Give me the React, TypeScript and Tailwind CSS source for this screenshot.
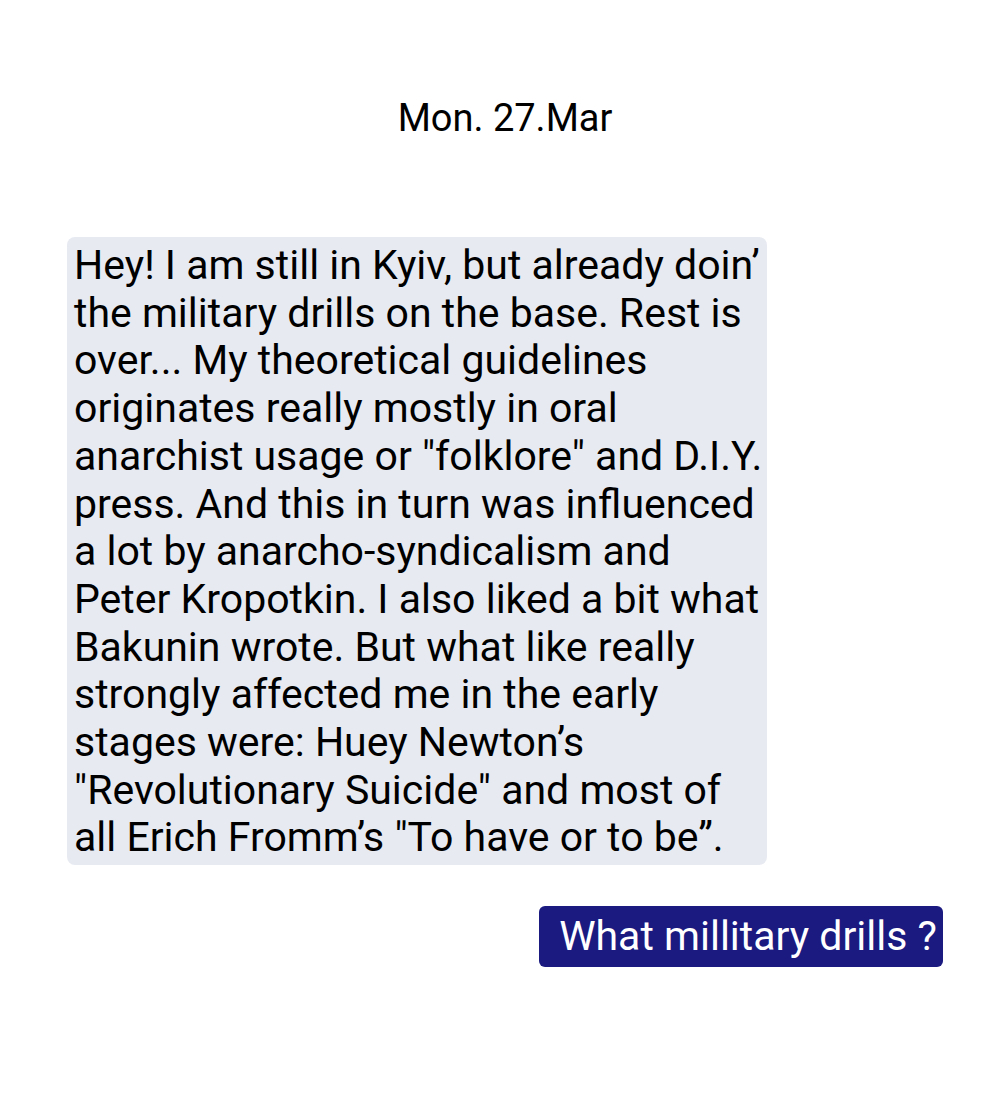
const lines = [
  "Hey! I am still in Kyiv, but already doin’",
  "the military drills on the base. Rest is",
  "over... My theoretical guidelines",
  "originates really mostly in oral",
  "anarchist usage or \"folklore\" and D.I.Y.",
  "press. And this in turn was influenced",
  "a lot by anarcho-syndicalism and",
  "Peter Kropotkin. I also liked a bit what",
  "Bakunin wrote. But what like really",
  "strongly affected me in the early",
  "stages were: Huey Newton’s",
  "\"Revolutionary Suicide\" and most of",
  "all Erich Fromm’s \"To have or to be”.",
];

export default function App() {
  return (
    <div className="w-[988px] h-[1118px] bg-white font-['Roboto',sans-serif] text-black flex flex-col">
      <div className="pt-[96px] pl-[22px] text-center text-[38px] leading-[44px]">Mon. 27.Mar</div>

      <div className="mt-[97px] ml-[67px] w-[700px] rounded-[8px] bg-[#e8eaf2] pl-[7px] pt-[5px] pb-[3px] text-[41px] leading-[47.7px]">
        {lines.map((l, i) => (
          <div key={i} className="whitespace-nowrap">{l}</div>
        ))}
      </div>

      <div className="mt-[41px] mr-[45px] self-end rounded-[6px] bg-[#1a1a80] pl-[20px] pr-[6px] h-[61px] flex items-center text-white text-[41px]">
        What millitary drills ?
      </div>
    </div>
  );
}
